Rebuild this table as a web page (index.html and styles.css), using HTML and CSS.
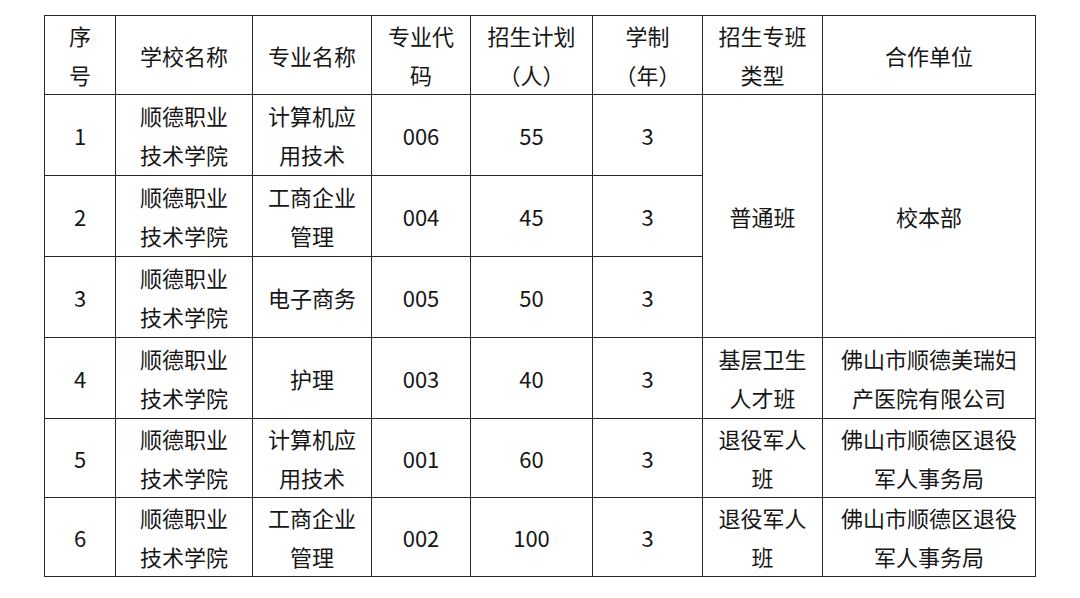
FILE: index.html
```html
<!DOCTYPE html>
<html lang="zh-CN">
<head>
<meta charset="utf-8">
<title>招生计划</title>
<link rel="stylesheet" href="styles.css">
</head>
<body>
<table class="plan">
  <colgroup>
    <col class="c-no">
    <col class="c-school">
    <col class="c-major">
    <col class="c-code">
    <col class="c-plan">
    <col class="c-years">
    <col class="c-type">
    <col class="c-partner">
  </colgroup>
  <thead>
    <tr class="r-head">
      <th>序<br>号</th>
      <th>学校名称</th>
      <th>专业名称</th>
      <th>专业代<br>码</th>
      <th>招生计划<br>（人）</th>
      <th>学制<br>（年）</th>
      <th>招生专班<br>类型</th>
      <th>合作单位</th>
    </tr>
  </thead>
  <tbody>
    <tr class="r-a">
      <td>1</td>
      <td>顺德职业<br>技术学院</td>
      <td>计算机应<br>用技术</td>
      <td>006</td>
      <td>55</td>
      <td>3</td>
      <td rowspan="3">普通班</td>
      <td rowspan="3">校本部</td>
    </tr>
    <tr class="r-b">
      <td>2</td>
      <td>顺德职业<br>技术学院</td>
      <td>工商企业<br>管理</td>
      <td>004</td>
      <td>45</td>
      <td>3</td>
    </tr>
    <tr class="r-b">
      <td>3</td>
      <td>顺德职业<br>技术学院</td>
      <td>电子商务</td>
      <td>005</td>
      <td>50</td>
      <td>3</td>
    </tr>
    <tr class="r-b">
      <td>4</td>
      <td>顺德职业<br>技术学院</td>
      <td>护理</td>
      <td>003</td>
      <td>40</td>
      <td>3</td>
      <td>基层卫生<br>人才班</td>
      <td>佛山市顺德美瑞妇<br>产医院有限公司</td>
    </tr>
    <tr class="r-c">
      <td>5</td>
      <td>顺德职业<br>技术学院</td>
      <td>计算机应<br>用技术</td>
      <td>001</td>
      <td>60</td>
      <td>3</td>
      <td>退役军人<br>班</td>
      <td>佛山市顺德区退役<br>军人事务局</td>
    </tr>
    <tr class="r-c">
      <td>6</td>
      <td>顺德职业<br>技术学院</td>
      <td>工商企业<br>管理</td>
      <td>002</td>
      <td>100</td>
      <td>3</td>
      <td>退役军人<br>班</td>
      <td>佛山市顺德区退役<br>军人事务局</td>
    </tr>
  </tbody>
</table>
</body>
</html>
```
FILE: styles.css
```css
html, body {
  margin: 0;
  padding: 0;
  background: #ffffff;
}
body {
  padding: 15px 0 0 44px;
  font-family: "Noto Sans CJK SC", "Noto Sans", sans-serif;
  color: #161616;
}
.plan {
  border-collapse: collapse;
  table-layout: fixed;
  width: 991px;
}
.c-no { width: 71px; }
.c-school { width: 137px; }
.c-major { width: 119px; }
.c-code { width: 99px; }
.c-plan { width: 122px; }
.c-years { width: 110px; }
.c-type { width: 120px; }
.c-partner { width: 213px; }
.plan th,
.plan td {
  border: 1.5px solid #262626;
  padding: 0;
  text-align: center;
  vertical-align: middle;
  font-size: 22px;
  font-weight: 400;
  line-height: 39px;
}
.r-head { height: 78px; }
.r-a { height: 81px; }
.r-b { height: 81px; }
.r-c { height: 78px; }
```
